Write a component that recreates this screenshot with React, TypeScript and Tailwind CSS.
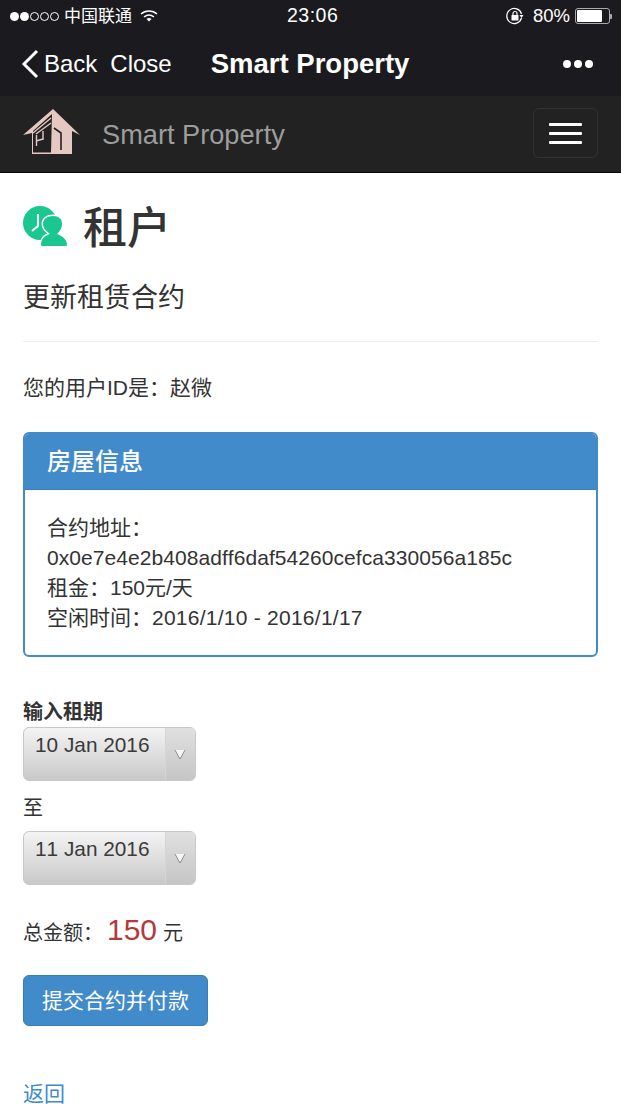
const sans = { fontFamily: '"Liberation Sans", "Noto Sans CJK SC", sans-serif' }

function StatusBar() {
  return (
    <div className="flex h-[32px] items-center bg-[#1b1b1f] pl-[10px] pr-[9px] text-white">
      <div className="flex items-center gap-[1px]">
        <span className="h-[9px] w-[9px] rounded-full bg-white" />
        <span className="h-[9px] w-[9px] rounded-full bg-white" />
        <span className="h-[9px] w-[9px] rounded-full border border-white" />
        <span className="h-[9px] w-[9px] rounded-full border border-white" />
        <span className="h-[9px] w-[9px] rounded-full border border-white" />
      </div>
      <span className="ml-[5px] text-[17px] leading-none">中国联通</span>
      <svg className="ml-[8px]" width="18" height="14" viewBox="0 0 18 14" fill="none" stroke="white">
        <path d="M1 5C5.5 1 12.5 1 17 5" strokeWidth="1.5" />
        <path d="M4 8C7 5.5 11 5.5 14 8" strokeWidth="1.5" />
        <path d="M6.5 10C8 8.8 10 8.8 11.5 10L9 12.5Z" fill="white" stroke="none" />
      </svg>
      <span className="ml-[129px] text-[19.5px] font-medium leading-none tracking-[0.5px]">23:06</span>
      <svg className="ml-auto" width="18" height="18" viewBox="0 0 18 18" fill="none" stroke="white">
        <path d="M15.5 11A7.5 7.5 0 1 1 15.5 7" strokeWidth="1.2" />
        <path d="M13.5 8L17.5 8L15.5 11Z" fill="white" stroke="none" />
        <rect x="5.5" y="8" width="7" height="5.5" rx="0.5" fill="white" stroke="none" />
        <path d="M7 8V6.5a2 2 0 0 1 4 0V8" strokeWidth="1.2" />
      </svg>
      <span className="ml-[9px] text-[18.5px] leading-none">80%</span>
      <div className="ml-[5px] flex items-center">
        <div className="flex h-[16px] w-[35px] rounded-[3px] border border-[#aaaaaa] p-[1px]">
          <div className="h-full w-[25px] rounded-[1px] bg-white" />
        </div>
        <div className="h-[5px] w-[2px] rounded-r-[1px] bg-[#aaaaaa]" />
      </div>
    </div>
  )
}

function WechatBar() {
  return (
    <div className="flex h-[64px] items-center bg-[#1b1b1f] pb-[1px] pl-[21px] pr-[28px] text-white">
      <svg width="18" height="30" viewBox="0 0 18 30" fill="none" stroke="white" strokeWidth="3">
        <path d="M16 2L3 15L16 28" />
      </svg>
      <span className="ml-[5px] text-[24px] leading-none">Back</span>
      <span className="ml-[13px] text-[24px] leading-none">Close</span>
      <span className="ml-[39px] mt-[1px] text-[27.5px] font-bold leading-none">Smart Property</span>
      <div className="ml-auto flex gap-[3px]">
        <span className="h-[8px] w-[8px] rounded-full bg-white" />
        <span className="h-[8px] w-[8px] rounded-full bg-white" />
        <span className="h-[8px] w-[8px] rounded-full bg-white" />
      </div>
    </div>
  )
}

function HouseLogo() {
  return (
    <svg className="mb-[5px]" width="58" height="46" viewBox="0 0 58 46">
      <path d="M30 0L57 26L49 22V45H9V24L0 26Z" fill="#e6c8c2" />
      <path d="M29 5L10 22V43.5H28Z" fill="#222222" />
      <path d="M10 24L28 9M13 25L28 14" stroke="#e6c8c2" strokeWidth="1.4" fill="none" />
      <path d="M13.5 26V37M13 32L20 30M20 22V31" stroke="#e6c8c2" strokeWidth="1.4" fill="none" />
      <path d="M31 19L38 24V41" stroke="#222222" strokeWidth="1.6" fill="none" />
    </svg>
  )
}

function NavBar() {
  return (
    <div className="flex h-[77px] items-center justify-between border-b-[1px] border-[#080808] bg-[#222222] pl-[23px] pr-[23px]">
      <div className="flex items-center gap-[21px]">
        <HouseLogo />
        <span className="mt-[1px] text-[27.2px] leading-none text-[#9d9d9d]">Smart Property</span>
      </div>
      <div className="mb-[2px] flex h-[50px] w-[65px] flex-col items-center justify-center gap-[6px] rounded-[6px] border border-[#333333]">
        <span className="h-[3px] w-[33px] rounded-[1px] bg-white" />
        <span className="h-[3px] w-[33px] rounded-[1px] bg-white" />
        <span className="h-[3px] w-[33px] rounded-[1px] bg-white" />
      </div>
    </div>
  )
}

function TenantIcon() {
  return (
    <svg className="self-start" width="46" height="42" viewBox="0 0 46 42">
      <circle cx="17" cy="17" r="17" fill="#19c78f" />
      <path d="M15 8V20L9 25" stroke="white" strokeWidth="2" fill="none" />
      <path
        d="M18 39C18 33 21 30 27 28C23 25 20 22 20 18C20 13 24 10 30 10C36 10 39 13 39 18C39 22 37 25 34 28C39 30 44 33 44 39Q44 40 43 40H19Q18 40 18 39Z"
        fill="#19c78f"
        stroke="white"
        strokeWidth="3"
        paintOrder="stroke"
      />
    </svg>
  )
}

function DateSelect({ value }: { value: string }) {
  return (
    <div className="flex h-[54px] w-[173px] overflow-hidden rounded-[6px] border-[1px] border-[#c8c8c8] bg-gradient-to-b from-[#f4f4f4] to-[#c9c9c9]">
      <div className="flex-1 pl-[11px] pt-[4px] text-[20.8px] leading-[26px] text-[#3a3a3a] [font-kerning:none]">{value}</div>
      <div className="flex w-[30px] items-center justify-center border-l border-[#d5d5d5] bg-gradient-to-b from-[#e0e0e0] to-[#c6c6c6] pr-[2px] pt-[1px]">
        <svg width="12" height="11" viewBox="0 0 12 11" fill="none">
          <path d="M1 1H11L6 10Z" fill="#f6f6f6" />
          <path d="M1 1L6 10L11 1" stroke="#8a8a8a" strokeWidth="1" />
        </svg>
      </div>
    </div>
  )
}

export default function App() {
  return (
    <div className="h-[1104px] overflow-hidden bg-white text-[#333333]" style={sans}>
      <StatusBar />
      <WechatBar />
      <NavBar />

      <div className="px-[23px]">
        <div className="mt-[33px] flex items-center gap-[14px]">
          <TenantIcon />
          <h1 className="text-[44px] font-medium leading-[46px]">租户</h1>
        </div>
        <h2 className="mt-[28px] text-[27px] leading-[36px]">更新租赁合约</h2>
        <hr className="mt-[25px] border-[#eeeeee]" />
        <p className="mt-[31px] text-[21px] leading-[30px]">您的用户ID是：赵微</p>

        <div className="mt-[29px] overflow-hidden rounded-[6px] border-[2px] border-[#428bca]">
          <div className="flex h-[56px] items-center border-b border-[#357ebd] bg-[#428bca] pl-[22px] text-[24px] font-medium text-white">
            房屋信息
          </div>
          <div className="px-[22px] pb-[22px] pt-[23px] text-[21px] leading-[30px] [font-kerning:none]">
            <div>合约地址：</div>
            <div className="tracking-[0.06px]">0x0e7e4e2b408adff6daf54260cefca330056a185c</div>
            <div>租金：150元/天</div>
            <div>
              空闲时间：<span className="tracking-[0.25px]">2016/1/10 - 2016/1/17</span>
            </div>
          </div>
        </div>

        <div className="mt-[41px] text-[20px] font-bold leading-[29px]">输入租期</div>
        <DateSelect value="10 Jan 2016" />
        <div className="mt-[12px] text-[20px] leading-[30px]">至</div>
        <div className="mt-[8px]">
          <DateSelect value="11 Jan 2016" />
        </div>

        <div className="mt-[25px] flex items-baseline text-[20px] leading-[40px]">
          <span>总金额：</span>
          <span className="ml-[4px] text-[30px] text-[#b33a3a]">150</span>
          <span className="ml-[6px]">元</span>
        </div>

        <button className="mt-[22px] block h-[51px] w-[185px] rounded-[6px] border border-[#357ebd] bg-[#428bca] text-[21px] text-white">
          提交合约并付款
        </button>

        <a className="mt-[53px] block text-[21px] leading-[30px] text-[#428bca]">返回</a>
      </div>
    </div>
  )
}
